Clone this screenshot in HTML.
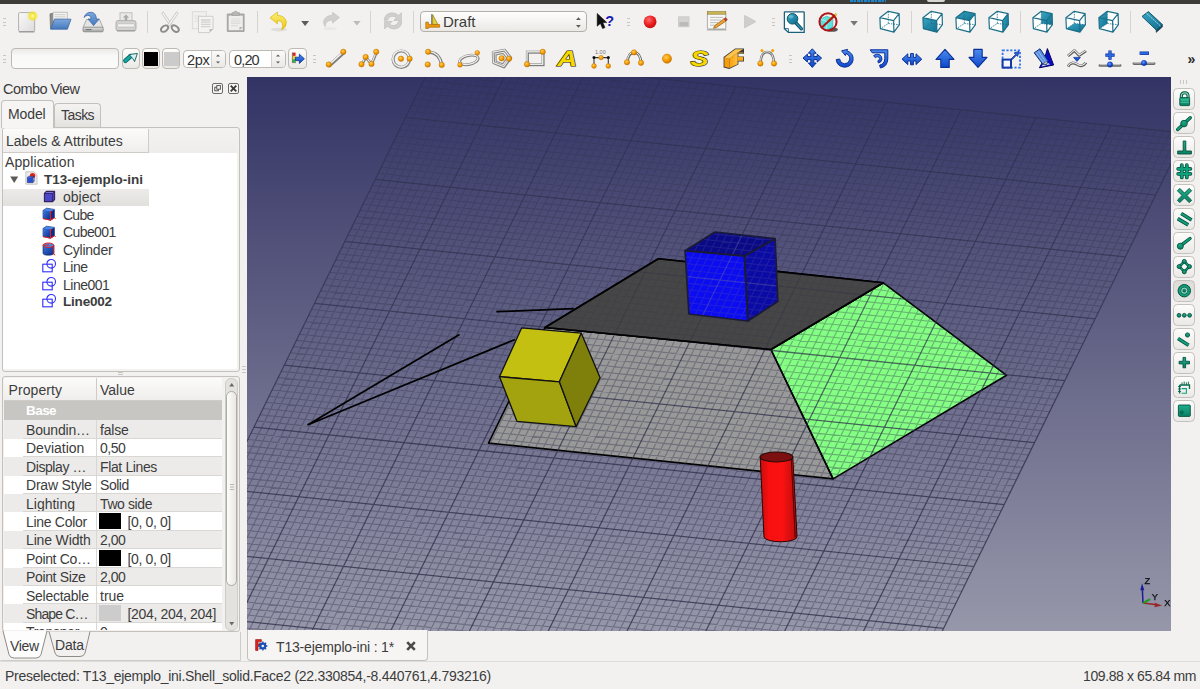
<!DOCTYPE html>
<html lang="es">
<head>
<meta charset="utf-8">
<title>FreeCAD</title>
<style>
*{box-sizing:border-box;margin:0;padding:0}
html,body{width:1200px;height:689px;overflow:hidden;background:#f2f1f0}
body{position:relative;font-family:"Liberation Sans",sans-serif;font-size:14px;color:#3c3c3c}
.abs{position:absolute}
#topstrip{left:0;top:0;width:1200px;height:3.6px;background:#3d3c38}
.t{position:absolute;white-space:nowrap;line-height:16px}
.ic{position:absolute;width:24px;height:24px;overflow:visible}
.sep{position:absolute;width:1px;height:22px;background:#d6d3cf}
.grip{position:absolute;width:3px;height:8px;border-top:1px solid #c9c6c1;border-bottom:1px solid #c9c6c1}
.grip:after{content:"";position:absolute;left:0;top:2.5px;width:3px;height:1px;background:#c9c6c1}
.btn{position:absolute;border:1px solid #bdb9b3;border-radius:4px;background:linear-gradient(#fdfdfc,#ebe9e6)}
.field{position:absolute;border:1px solid #bdb9b3;border-radius:4px;background:linear-gradient(#eceae8,#f8f8f7 35%,#fbfbfa)}
</style>
</head>
<body>
<div id="topstrip" class="abs"></div>
<div class="abs" style="left:850px;top:0;width:36px;height:2px;background:repeating-linear-gradient(90deg,#1c86c8 0 3px,#2a5a80 3px 4px,#1c86c8 4px 6px,#3d3c38 6px 7px)"></div>
<div class="abs" style="left:927px;top:0;width:17.500px;height:1.600px;background:#d8d6d2;border-radius:0 0 2px 2px"></div>
<!-- TOOLBAR ROW 1 -->
<svg width="0" height="0" style="position:absolute"><defs>
<linearGradient id="pg" x1="0" y1="0" x2="1" y2="1"><stop offset="0" stop-color="#fafafa"/><stop offset="1" stop-color="#dcdcdc"/></linearGradient>
<radialGradient id="glow"><stop offset="0" stop-color="#fffbd0"/><stop offset=".45" stop-color="#f6e62a"/><stop offset="1" stop-color="#f0e020" stop-opacity="0"/></radialGradient>
<linearGradient id="blu" x1="0" y1="0" x2="0" y2="1"><stop offset="0" stop-color="#7fa8dc"/><stop offset="1" stop-color="#4479bd"/></linearGradient>
<linearGradient id="drv" x1="0" y1="0" x2="0" y2="1"><stop offset="0" stop-color="#e8e8e8"/><stop offset="1" stop-color="#9c9c9c"/></linearGradient>
<radialGradient id="ball" cx=".4" cy=".35" r=".7"><stop offset="0" stop-color="#ffd060"/><stop offset=".5" stop-color="#f9a000"/><stop offset="1" stop-color="#c87000"/></radialGradient>
<radialGradient id="bball" cx=".4" cy=".35" r=".7"><stop offset="0" stop-color="#6aa0ff"/><stop offset=".6" stop-color="#1048e0"/><stop offset="1" stop-color="#0a2a90"/></radialGradient>
<radialGradient id="red" cx=".4" cy=".35" r=".7"><stop offset="0" stop-color="#ff6a6a"/><stop offset=".6" stop-color="#e81c1c"/><stop offset="1" stop-color="#c01010"/></radialGradient>
<linearGradient id="yel" x1="0" y1="0" x2="0" y2="1"><stop offset="0" stop-color="#fdf07a"/><stop offset="1" stop-color="#e8c60e"/></linearGradient>
<linearGradient id="bl2" x1="0" y1="0" x2="0" y2="1"><stop offset="0" stop-color="#4a8cf0"/><stop offset="1" stop-color="#0f46c8"/></linearGradient>
<linearGradient id="teal" x1="0" y1="0" x2="1" y2="1"><stop offset="0" stop-color="#3aa6c4"/><stop offset="1" stop-color="#0f6f90"/></linearGradient>
<linearGradient id="org" x1="0" y1="0" x2="1" y2="0"><stop offset="0" stop-color="#f6a010"/><stop offset="1" stop-color="#ffc040"/></linearGradient>
<linearGradient id="grn" x1="0" y1="0" x2="0" y2="1"><stop offset="0" stop-color="#1fae8c"/><stop offset="1" stop-color="#0a8064"/></linearGradient>
</defs></svg>
<div class="grip" style="left:3px;top:18px"></div>
<!-- new -->
<svg class="ic" style="left:15px;top:10px" viewBox="0 0 24 24"><rect x="3.6" y="2.6" width="16" height="19" rx="1" fill="url(#pg)" stroke="#aaa9a6" stroke-width=".9"/><path d="M4 21.9h15.4" stroke="#8e8d8a" stroke-width="1"/><circle cx="17.6" cy="6" r="5.800" fill="url(#glow)"/></svg>
<!-- open -->
<svg class="ic" style="left:48px;top:10px" viewBox="0 0 24 24"><path d="M2 4.5Q2 3.5 3 3.5H7.5L9 5H17.5V18.5H2.5z" fill="#8c8c8a" stroke="#6a6a68" stroke-width=".7"/><path d="M5 2.3H19.3V12H5z" fill="#f4f4f4" stroke="#9a9a98" stroke-width=".6"/><path d="M6.5 4.5h11M6.5 6.3h11M6.5 8.1h11" stroke="#c4c4c4" stroke-width=".7"/><path d="M2.6 19.2L6.4 9.2H23L19.4 19.2z" fill="url(#blu)" stroke="#3a68a6" stroke-width=".8"/></svg>
<!-- save -->
<svg class="ic" style="left:81px;top:10px" viewBox="0 0 24 24"><path d="M5.5 9.5H18.5L22 17.5H2z" fill="#e4e4e4" stroke="#9a9a98" stroke-width=".8"/><rect x="2" y="17.2" width="20.2" height="4.6" rx="1" fill="url(#drv)" stroke="#858583" stroke-width=".8"/><path d="M4.5 19.6h6" stroke="#6e6e6c" stroke-width="1"/><path d="M3 7.5Q5 1.8 10.5 2.3Q15.2 3 15.4 9H18.2L12.6 15.6L7 9H10Q10 5.2 6.6 5.4Q4.3 5.6 3 7.5z" fill="url(#blu)" stroke="#2f5fa2" stroke-width=".7"/></svg>
<!-- print (disabled) -->
<svg class="ic" style="left:114px;top:10px" viewBox="0 0 24 24"><rect x="6" y="2.800" width="12" height="9" fill="#e9e9e8" stroke="#b3b3b1" stroke-width=".8"/><path d="M12 4.400l3.200 3.200h-1.900v2.800h-2.600V7.600H8.800z" fill="#a9a9a7"/><path d="M4 10.600H20Q22 10.600 22 12.600V19Q22 20.800 20 20.800H4Q2 20.800 2 19V12.600Q2 10.600 4 10.600z" fill="#d2d2d0" stroke="#a4a4a2" stroke-width=".8"/><rect x="3.400" y="13.800" width="17.200" height="3.200" rx="1.300" fill="#f4f4f3" stroke="#b2b2b0" stroke-width=".6"/><path d="M3 20.800h18" stroke="#9c9c9a" stroke-width="1.200"/></svg>
<div class="sep" style="left:147px;top:11px"></div>
<!-- cut (disabled) -->
<svg class="ic" style="left:158px;top:10px" viewBox="0 0 24 24"><path d="M5.2 1.8L14.6 15.6L12.6 16.4L3.6 3.2z" fill="#f4f4f4" stroke="#b9b9b7" stroke-width=".7"/><path d="M18.6 1.8L9.2 15.6L11.2 16.4L20.2 3.2z" fill="#f4f4f4" stroke="#b9b9b7" stroke-width=".7"/><ellipse cx="6.6" cy="18.6" rx="4" ry="2.6" transform="rotate(-38 6.6 18.6)" fill="none" stroke="#8c8c8a" stroke-width="1.9"/><ellipse cx="17.2" cy="18.6" rx="4" ry="2.6" transform="rotate(38 17.2 18.6)" fill="none" stroke="#8c8c8a" stroke-width="1.9"/></svg>
<!-- copy (disabled) -->
<svg class="ic" style="left:191px;top:10px" viewBox="0 0 24 24"><rect x="1.3" y="1.8" width="14" height="17" fill="#f1f0ef" stroke="#d6d5d3" stroke-width=".8"/><path d="M3.5 6h6M3.5 8.5h6M3.5 11h4" stroke="#dcdbd9" stroke-width=".8"/><path d="M7.5 6.3H22V19L18.5 22.6H7.5z" fill="#f3f3f2" stroke="#c4c3c1" stroke-width=".8"/><path d="M10 10h9.5M10 12.2h9.5M10 14.4h9.5M10 16.6h9.5" stroke="#d3d2d0" stroke-width="1.3"/><path d="M18.5 22.6V19H22z" fill="#bdbcba"/></svg>
<!-- paste (disabled) -->
<svg class="ic" style="left:224px;top:10px" viewBox="0 0 24 24"><rect x="2.8" y="3.4" width="17.8" height="18.6" rx="1" fill="#a7a6a4"/><rect x="4.6" y="5.6" width="14.2" height="14.6" fill="#eeeeed"/><path d="M7 9h9.5M7 11.2h9.5M7 13.4h9.5M7 15.6h7" stroke="#dddcda" stroke-width="1.2"/><path d="M8 2.6H10Q10 1.2 11.7 1.2Q13.4 1.2 13.4 2.6H15.4V5.4H8z" fill="#b9b8b6" stroke="#9b9a98" stroke-width=".6"/><path d="M15.5 20.2V17H18.8z" fill="#b5b4b2"/></svg>
<div class="sep" style="left:257px;top:11px"></div>
<!-- undo -->
<svg class="ic" style="left:267px;top:10px" viewBox="0 0 24 24"><ellipse cx="12" cy="19.6" rx="8" ry="1.8" fill="#d8d6d2" opacity=".7"/><path d="M3 7.8L10.4 2V5.4Q18.6 5.6 19.4 12.4Q19.6 17 14.6 19.8Q16.8 15.6 15 12.6Q13.6 10.6 10.4 10.6V13.8z" fill="url(#yel)" stroke="#d9b40a" stroke-width=".7" stroke-linejoin="round"/></svg>
<svg class="abs" style="left:300px;top:20px" width="10" height="7" viewBox="0 0 10 7"><path d="M1.2 1h7.8L5.1 6z" fill="#5c5b59"/></svg>
<!-- redo (disabled) -->
<svg class="ic" style="left:319px;top:10px" viewBox="0 0 24 24"><ellipse cx="11" cy="18.6" rx="7" ry="1.5" fill="#e6e4e1" opacity=".7"/><path d="M20.4 7.4L13.6 2.2V5.2Q5.8 5.4 4.6 11.6Q4.4 14.6 6.2 16.6Q6.2 13.4 8.4 11.6Q10.2 10.2 13.6 10.2V13.2z" fill="#cfcfcd" stroke="#bebebc" stroke-width=".6" stroke-linejoin="round"/></svg>
<svg class="abs" style="left:352px;top:20px" width="10" height="7" viewBox="0 0 10 7"><path d="M1.2 1h7.4L4.9 5.6z" fill="#bcbbb8"/></svg>
<div class="sep" style="left:370px;top:11px"></div>
<!-- refresh (disabled) -->
<svg class="ic" style="left:381px;top:10px" viewBox="0 0 24 24"><path d="M3.2 10.2Q3.6 3.4 11 2.8Q15.2 2.8 17.6 5.6L20.4 2.8V10.4H12.8L15.4 7.8Q13.6 6 11 6.2Q7 6.8 6.6 10.2z" fill="#cfcfcd" stroke="#b9b9b7" stroke-width=".6"/><path d="M20.8 11.6Q20.4 18.4 13 19Q8.800 19 6.400 16.200L3.600 19V11.400H11.200L8.600 14Q10.400 15.800 13 15.600Q17 15 17.400 11.600z" fill="#cfcfcd" stroke="#b9b9b7" stroke-width=".6"/></svg>
<div class="sep" style="left:413px;top:11px"></div>
<!-- combobox -->
<div class="btn" style="left:420px;top:11px;width:167px;height:21px;border-color:#b3afa9"></div>
<svg class="abs" style="left:424px;top:13px" width="18" height="17" viewBox="0 0 18 17"><path d="M7.8 1.2V11.5" stroke="#5a5a58" stroke-width="1"/><path d="M8.6 1.6L13.8 11.4H8.6z" fill="#e8d23a" stroke="#8a7a10" stroke-width=".7"/><path d="M1.8 9.2H4.400V11.6H15.600V14.200H4.400V15.400H1.800z" fill="#f39a0e" stroke="#a86404" stroke-width=".7"/></svg>
<div class="t" style="left:443px;top:13.5px;font-size:15px;color:#3c3c3c">Draft</div>
<svg class="abs" style="left:574px;top:14px" width="9" height="16" viewBox="0 0 9 16"><path d="M2 6L4.400 3.200L6.800 6z" fill="#5c5b59"/><path d="M2 11L4.400 13.800L6.800 11z" fill="#5c5b59"/></svg>
<!-- whats this -->
<svg class="ic" style="left:593px;top:10px" viewBox="0 0 24 24"><path d="M4.200 3.400V16.200L7.400 13.400L9.600 18.600L12 17.600L9.800 12.600H13.800z" fill="#111" stroke="#000" stroke-width=".5"/><text x="12.200" y="15.600" font-family="Liberation Sans,sans-serif" font-weight="bold" font-size="14.500" fill="#1a1ab4">?</text></svg>
<div class="grip" style="left:627px;top:18px"></div>
<!-- record -->
<svg class="ic" style="left:638px;top:10px" viewBox="0 0 24 24"><circle cx="12.100" cy="11.800" r="6.400" fill="url(#red)"/></svg>
<!-- stop disabled -->
<svg class="ic" style="left:671px;top:10px" viewBox="0 0 24 24"><rect x="7.600" y="6.800" width="10.400" height="10" fill="#d4d3d1" stroke="#c9c8c6" stroke-width=".8"/><rect x="8.400" y="12" width="8.800" height="4.200" fill="#bcbbb9"/></svg>
<!-- macro edit -->
<svg class="ic" style="left:704px;top:10px" viewBox="0 0 24 24"><path d="M2.800 20.600H22.800L21.400 17.600H4z" fill="#b5b4b1"/><rect x="3.400" y="2.600" width="18.400" height="16.400" rx="1" fill="#f6f6f4" stroke="#9c9b98" stroke-width=".8"/><rect x="3.400" y="1.600" width="18.400" height="2.600" fill="#c9b458" stroke="#8d7c2e" stroke-width=".6"/><path d="M6 7.400h13M6 10h11M6 12.600h8M6 15.200h6" stroke="#b8b7b4" stroke-width=".9"/><path d="M10.600 15.800L20 8.800L22 11L12.400 17.600L9.600 18.200z" fill="#f0a030" stroke="#8a5a14" stroke-width=".7"/><path d="M20 8.800L21.600 7.600L23.400 9.800L22 11z" fill="#d04040" stroke="#7a2020" stroke-width=".5"/></svg>
<!-- play disabled -->
<svg class="ic" style="left:737px;top:10px" viewBox="0 0 24 24"><path d="M7.600 5.400L18.800 11.600L7.600 17.800z" fill="#cfcecc" stroke="#c2c1bf" stroke-width=".8"/></svg>
<div class="grip" style="left:772px;top:18px"></div>
<!-- fit all -->
<svg class="ic" style="left:782px;top:10px" viewBox="0 0 24 24"><path d="M3 1.800H21.600Q22.200 1.800 22.200 2.400V22.400H6.400L2.400 18.800V2.400Q2.400 1.800 3 1.800z" fill="#fff" stroke="#1d607a" stroke-width="1.300"/><path d="M2.600 18.600H6.400V22.200" fill="none" stroke="#1d607a" stroke-width=".9"/><path d="M14 13L19.400 18.800" stroke="#124e66" stroke-width="3.400" stroke-linecap="round"/><path d="M14 13L19.400 18.800" stroke="#2a93b2" stroke-width="1.600" stroke-linecap="round"/><circle cx="10.500" cy="8.800" r="5.300" fill="url(#teal)" stroke="#125068" stroke-width="1"/><ellipse cx="9" cy="6.800" rx="2.400" ry="1.700" fill="#7fd0e4" opacity=".6"/></svg>
<!-- draw style -->
<svg class="ic" style="left:815px;top:10px" viewBox="0 0 24 24"><ellipse cx="17" cy="19.600" rx="6" ry="2.200" fill="#222" opacity=".75"/><path d="M5.600 9L11.600 6.200L17.800 8.600V17L11.600 20.400L5.600 17.600z" fill="#5fe0e0" stroke="#2fa8ac" stroke-width=".6"/><path d="M5.600 9L11.600 11.400L17.800 8.600M11.600 11.400V20.400" stroke="#bff6f6" stroke-width=".8" fill="none"/><path d="M12.400 10.400L20.800 3.400L22 4.600L13.800 11.800z" fill="#f0d820" stroke="#a08a10" stroke-width=".5"/><circle cx="13" cy="11.800" r="8.600" fill="none" stroke="#b01414" stroke-width="2"/><path d="M6.800 17.600L19.200 6" stroke="#b01414" stroke-width="2"/></svg>
<svg class="abs" style="left:849px;top:20px" width="10" height="7" viewBox="0 0 10 7"><path d="M1.400 1h7.400L5.100 5.800z" fill="#777674"/></svg>
<div class="sep" style="left:867px;top:11px"></div>
<svg width="0" height="0" style="position:absolute"><defs>
<g id="cubew" fill="none" stroke="#1d6f88" stroke-width="1.200" stroke-linejoin="round"><path d="M2.900 7.700L16.600 10.600L16.900 22.200L3.400 18.700zM2.900 7.700L11.300 1.300L22.100 3.600L16.600 10.600M22.100 3.600L22.400 14.700L16.900 22.200"/><path d="M11.300 1.300V13.500L3.400 18.700M11.300 13.500L22.400 14.700" stroke-width=".8" stroke-dasharray="1.600 1"/></g>
<path id="cubebg" d="M2.900 7.700L11.300 1.300L22.100 3.600L22.400 14.700L16.900 22.200L3.400 18.700z" fill="#fff"/>
</defs></svg>
<svg class="ic" style="left:877px;top:10px" viewBox="0 0 24 24"><use href="#cubebg"/><use href="#cubew"/></svg>
<div class="sep" style="left:911px;top:11px"></div>
<svg class="ic" style="left:920px;top:10px" viewBox="0 0 24 24"><use href="#cubebg"/><path d="M2.900 7.700L16.600 10.600L16.900 22.200L3.400 18.700z" fill="url(#teal)"/><use href="#cubew"/></svg>
<svg class="ic" style="left:953px;top:10px" viewBox="0 0 24 24"><use href="#cubebg"/><path d="M2.900 7.700L11.300 1.300L22.100 3.600L16.600 10.600z" fill="url(#teal)"/><use href="#cubew"/></svg>
<svg class="ic" style="left:986px;top:10px" viewBox="0 0 24 24"><use href="#cubebg"/><path d="M16.600 10.600L22.100 3.600L22.400 14.700L16.900 22.200z" fill="url(#teal)"/><use href="#cubew"/></svg>
<div class="sep" style="left:1020px;top:11px"></div>
<svg class="ic" style="left:1030px;top:10px" viewBox="0 0 24 24"><use href="#cubebg"/><path d="M11.300 1.300L22.100 3.600L22.400 14.700L11.300 13.500z" fill="url(#teal)"/><use href="#cubew"/></svg>
<svg class="ic" style="left:1063px;top:10px" viewBox="0 0 24 24"><use href="#cubebg"/><path d="M3.400 18.700L11.300 13.500L22.400 14.700L16.900 22.200z" fill="url(#teal)"/><use href="#cubew"/></svg>
<svg class="ic" style="left:1096px;top:10px" viewBox="0 0 24 24"><use href="#cubebg"/><path d="M2.900 7.700L11.300 1.300V13.500L3.400 18.700z" fill="url(#teal)"/><use href="#cubew"/></svg>
<div class="sep" style="left:1130px;top:11px"></div>
<!-- ruler -->
<svg class="ic" style="left:1140px;top:10px" viewBox="0 0 24 24"><path d="M2 6.400L8.400 1.600L22.400 14.600L16.200 20z" fill="url(#teal)" stroke="#0e4c62" stroke-width=".9"/><path d="M16.200 20V22.400L22.400 17V14.600" fill="#12485c" stroke="#0e3a4a" stroke-width=".6"/><path d="M6.600 3.400l1.800 1.700M8.800 5.400l1.200 1.100M10.600 7l1.800 1.700M12.800 9l1.200 1.100M14.600 10.600l1.800 1.700M16.800 12.600l1.200 1.100M18.600 14.300l1.800 1.700" stroke="#bfe6f0" stroke-width=".8"/></svg>
<!-- TOOLBAR ROW 2 -->
<div class="grip" style="left:3px;top:55px"></div>
<div class="field" style="left:11px;top:48px;width:108px;height:21px"></div>
<div class="btn" style="left:122px;top:48px;width:18px;height:21px"></div>
<svg class="abs" style="left:122px;top:48px" width="18" height="21" viewBox="0 0 18 21"><path d="M3.400 12.800L8.600 8.200" stroke="#0a6e6e" stroke-width="4.600" stroke-linecap="round"/><path d="M3.400 12.800L8.600 8.200" stroke="#17a8a4" stroke-width="2.600" stroke-linecap="round"/><path d="M7.200 6.600L15.400 5.400L12.600 13.600L10.800 10.600z" fill="#d9f2ee" stroke="#0a5c5c" stroke-width=".9" stroke-linejoin="round"/></svg>
<div class="btn" style="left:142px;top:48px;width:18px;height:21px"></div>
<div class="abs" style="left:143.700px;top:51.500px;width:14.600px;height:14.500px;background:#000"></div>
<div class="btn" style="left:162px;top:48px;width:18px;height:21px"></div>
<div class="abs" style="left:164px;top:51.500px;width:14.600px;height:14.500px;background:#cbcbcb"></div>
<div class="field" style="left:183px;top:50px;width:43px;height:18px;background:#fff"></div>
<div class="abs" style="left:211px;top:51px;width:14px;height:16px;border-left:1px solid #d5d2ce;background:linear-gradient(#fafaf9,#ebe9e6);border-radius:0 3px 3px 0"></div>
<div class="t" style="left:187px;top:51.8px;font-size:14.500px;letter-spacing:-.3px;color:#333">2px</div>
<svg class="abs" style="left:213px;top:52px" width="10" height="14" viewBox="0 0 10 14"><path d="M3 4.600L5 2.400L7 4.600z" fill="#5c5b59"/><path d="M3 9.400L5 11.600L7 9.400z" fill="#5c5b59"/></svg>
<div class="field" style="left:228.500px;top:50px;width:57.500px;height:18px;background:#fff"></div>
<div class="abs" style="left:271px;top:51px;width:14px;height:16px;border-left:1px solid #d5d2ce;background:linear-gradient(#fafaf9,#ebe9e6);border-radius:0 3px 3px 0"></div>
<div class="t" style="left:234px;top:51.8px;font-size:14.500px;letter-spacing:-.85px;color:#333">0,20</div>
<svg class="abs" style="left:273px;top:52px" width="10" height="14" viewBox="0 0 10 14"><path d="M3 4.600L5 2.400L7 4.600z" fill="#5c5b59"/><path d="M3 9.400L5 11.600L7 9.400z" fill="#5c5b59"/></svg>
<div class="btn" style="left:288px;top:48px;width:18.500px;height:21px"></div>
<svg class="abs" style="left:288px;top:48px" width="19" height="21" viewBox="0 0 19 21"><rect x="4.600" y="4.600" width="3" height="3.300" fill="#e02020"/><rect x="4.600" y="7.900" width="3" height="3.300" fill="#f0d020"/><rect x="4.600" y="11.200" width="3" height="3" fill="#20c020"/><path d="M4.400 4.400V14.600H8" fill="none" stroke="#555" stroke-width=".7"/><path d="M7.400 9.200H11.400V6.200L16.400 10.800L11.400 15.400V12.600H7.400z" fill="url(#bl2)" stroke="#0a2f96" stroke-width=".8" stroke-linejoin="round"/></svg>
<div class="grip" style="left:313px;top:55px"></div>
<svg width="0" height="0" style="position:absolute"><defs><circle id="ob" r="2.700" fill="url(#ball)" stroke="#b46a00" stroke-width=".4"/><circle id="bb" r="2.700" fill="url(#bball)" stroke="#0a2a80" stroke-width=".4"/></defs></svg>
<!-- line -->
<svg class="ic" style="left:324px;top:47px" viewBox="0 0 24 24"><path d="M5.600 18.400L19.600 5.600" stroke="#7d7d7b" stroke-width="3.600" stroke-linecap="round"/><path d="M5.200 17.600L19.200 4.800" stroke="#efefee" stroke-width="1.600"/><use href="#ob" x="4.750" y="17.500"/><use href="#ob" x="19.300" y="4.800"/></svg>
<!-- wire -->
<svg class="ic" style="left:357px;top:47px" viewBox="0 0 24 24"><path d="M4.800 17.600L8.800 10.400L14.600 17.200L19.500 5.200" fill="none" stroke="#7d7d7b" stroke-width="2.800" stroke-linejoin="round"/><path d="M4.500 17.300L8.600 10L14.500 16.900L19.200 4.800" fill="none" stroke="#efefee" stroke-width="1.100"/><use href="#ob" x="4.500" y="17.300"/><use href="#ob" x="8.600" y="10"/><use href="#ob" x="14.500" y="16.900"/><use href="#ob" x="19.250" y="4.800"/></svg>
<!-- circle -->
<svg class="ic" style="left:390px;top:47px" viewBox="0 0 24 24"><circle cx="11.300" cy="12.200" r="8.200" fill="none" stroke="#8a8a88" stroke-width="3.200"/><circle cx="11" cy="11.700" r="8.200" fill="none" stroke="#f1f1f0" stroke-width="1.500"/><use href="#ob" x="11" y="11.700"/><use href="#ob" x="19.600" y="11.700"/></svg>
<!-- arc -->
<svg class="ic" style="left:423px;top:47px" viewBox="0 0 24 24"><path d="M6.600 5.200Q16.200 6 18.800 17.600" fill="none" stroke="#7d7d7b" stroke-width="3.200" stroke-linecap="round"/><path d="M6.200 4.700Q16 5.400 18.500 17.200" fill="none" stroke="#efefee" stroke-width="1.300"/><use href="#ob" x="5.100" y="4.800"/><use href="#ob" x="4.700" y="17.500"/><use href="#ob" x="18.700" y="17.900"/></svg>
<!-- ellipse -->
<svg class="ic" style="left:456px;top:47px" viewBox="0 0 24 24"><ellipse cx="12.900" cy="13" rx="9.400" ry="4.500" transform="rotate(-12 12.900 13)" fill="none" stroke="#7d7d7b" stroke-width="2.800"/><ellipse cx="12.700" cy="12.700" rx="9.400" ry="4.500" transform="rotate(-12 12.700 12.700)" fill="none" stroke="#efefee" stroke-width="1.200"/><use href="#ob" x="21.300" y="5.800" transform="translate(2.100 .6) scale(.9)"/><use href="#ob" x="4" y="17.900" transform="translate(.4 1.800) scale(.9)"/></svg>
<!-- polygon -->
<svg class="ic" style="left:489px;top:47px" viewBox="0 0 24 24"><path d="M4.200 5.400L15.600 3.200L21.800 10.800L15 20L4.600 15.800z" fill="none" stroke="#7d7d7b" stroke-width="2.800" stroke-linejoin="round"/><path d="M4 5.100L15.400 2.900L21.500 10.500L14.800 19.600L4.400 15.500z" fill="none" stroke="#efefee" stroke-width="1.100"/><path d="M7 7.800L14 6.400L17.800 11.200L13.600 16.800L7.200 14.200z" fill="none" stroke="#8f8f8d" stroke-width="1.200"/><use href="#ob" x="12.600" y="11.300"/><use href="#ob" x="20" y="11.700"/></svg>
<!-- rectangle -->
<svg class="ic" style="left:523px;top:47px" viewBox="0 0 24 24"><rect x="4.400" y="5.200" width="15.700" height="12.500" fill="none" stroke="#7d7d7b" stroke-width="3"/><rect x="4" y="4.800" width="15.700" height="12.500" fill="none" stroke="#efefee" stroke-width="1.300"/><use href="#ob" x="19.700" y="4.800"/><use href="#ob" x="4" y="17.300"/></svg>
<!-- text A -->
<svg class="ic" style="left:556px;top:47px" viewBox="0 0 24 24"><text x="1.200" y="19.400" font-family="Liberation Sans,sans-serif" font-style="italic" font-weight="bold" font-size="22.500" fill="#f4d800" stroke="#1a1600" stroke-width="1.100" paint-order="stroke" textLength="20" lengthAdjust="spacingAndGlyphs">A</text></svg>
<!-- dimension -->
<svg class="ic" style="left:589px;top:47px" viewBox="0 0 24 24"><text x="6" y="6.600" font-family="Liberation Sans,sans-serif" font-size="5.500" fill="#777">1.00</text><path d="M5 10.600V19M19.300 10.600V19M5 10.600H19.300" stroke="#3a3a3a" stroke-width="1.100" fill="none"/><circle cx="5" cy="10.600" r="1.500" fill="#111"/><circle cx="19.300" cy="10.600" r="1.500" fill="#111"/><use href="#ob" x="5" y="19" transform="translate(.5 1.900) scale(.9)"/><use href="#ob" x="19.300" y="19" transform="translate(1.900 1.900) scale(.9)"/><use href="#ob" x="12" y="10.600" transform="translate(1.800 1.600) scale(.85)"/></svg>
<!-- bspline -->
<svg class="ic" style="left:622px;top:47px" viewBox="0 0 24 24"><path d="M5.400 15.600Q6 5.600 12.200 5.600Q18.400 5.600 19.200 16" fill="none" stroke="#6e6e6c" stroke-width="2.600"/><path d="M5.200 15.200Q5.800 5.200 12 5.200Q18.200 5.200 19 15.600" fill="none" stroke="#efefee" stroke-width="1"/><use href="#ob" x="12" y="5.400"/><use href="#ob" x="5" y="15.200"/><use href="#ob" x="19" y="15.800"/></svg>
<!-- point -->
<svg class="ic" style="left:655px;top:47px" viewBox="0 0 24 24"><circle cx="12" cy="11.700" r="4.600" fill="url(#ball)" stroke="#c07400" stroke-width=".5"/></svg>
<!-- shapestring S -->
<svg class="ic" style="left:688px;top:47px" viewBox="0 0 24 24"><text x="2.600" y="19.200" font-family="Liberation Sans,sans-serif" font-style="italic" font-weight="bold" font-size="22" fill="#f4d800" stroke="#2a2400" stroke-width="1.100" paint-order="stroke" textLength="18" lengthAdjust="spacingAndGlyphs">S</text></svg>
<!-- facebinder -->
<svg class="ic" style="left:722px;top:47px" viewBox="0 0 24 24"><path d="M1.600 10L13.200 1.400H22V6.800H16.400V9.400H22V14.600H16.400V17.600L7.200 22L1.600 20.600z" fill="#3a3a3a"/><path d="M2.400 10.600L7.400 11.800V21L2.400 19.800z" fill="#f79c0c"/><path d="M7.400 11.800L15.600 5.400V17.200L7.400 21z" fill="url(#org)"/><path d="M2.400 10.600L13.400 2.200H21.200L15.600 5.400L7.400 11.800z" fill="#ffc44a"/><path d="M15.600 5.400H21.200V6.200H16.200z M15.600 9.800H21.200V13.800H15.600z" fill="#f9a81c"/></svg>
<!-- bezier -->
<svg class="ic" style="left:755px;top:47px" viewBox="0 0 24 24"><path d="M5.600 16.400Q5.800 5 12.200 5Q18.600 5 19 16.400" fill="none" stroke="#6e6e6c" stroke-width="2.400"/><path d="M5.400 16Q5.600 4.600 12 4.600Q18.400 4.600 18.800 16" fill="none" stroke="#efefee" stroke-width=".9"/><circle cx="7" cy="3.500" r="1.500" fill="#f9a000"/><circle cx="17.700" cy="3.500" r="1.500" fill="#f9a000"/><use href="#ob" x="5.400" y="16.500"/><use href="#ob" x="19" y="16.500"/></svg>
<div class="grip" style="left:789px;top:55px"></div>
<!-- move -->
<svg class="ic" style="left:800px;top:47px" viewBox="0 0 24 24"><path d="M12.300 1.800L16.200 6.200H13.800V9.600H17.200V7.200L21.600 11.100L17.200 15V12.600H13.800V16H16.200L12.300 20.400L8.400 16H10.800V12.600H7.400V15L3 11.100L7.400 7.200V9.600H10.800V6.200H8.400z" fill="url(#bl2)" stroke="#0a2f96" stroke-width="1" stroke-linejoin="round"/></svg>
<!-- rotate -->
<svg class="ic" style="left:833px;top:47px" viewBox="0 0 24 24"><path d="M14.600 2.400L8.600 3.800L12.400 8.600L13 6.400Q17.600 8.400 16.600 13Q15.400 16.800 11.400 16.800Q7.200 16.400 6.600 12L3.200 12.600Q4 19.400 11.400 20.200Q18.600 19.800 20 13.400Q21 6.400 14 3.800z" fill="url(#bl2)" stroke="#0a2f96" stroke-width="1" stroke-linejoin="round"/></svg>
<!-- offset -->
<svg class="ic" style="left:866.500px;top:47px" viewBox="0 0 24 24"><path d="M3.200 2.800H20.800V12Q20.400 19.600 13.400 21L12.600 18.200Q17.600 17 17.800 11.600V5.800H5.200z" fill="url(#bl2)" stroke="#0a2f96" stroke-width="1" stroke-linejoin="round"/><path d="M6.600 8.600Q9 6.600 12 7.400Q15.400 8.800 15 12.400Q14.400 15.400 11.400 16L10.800 13.800Q12.600 13.200 12.600 11.600Q12.400 9.800 10.600 9.800Q9.200 9.800 8.400 10.800z" fill="url(#bl2)" stroke="#0a2f96" stroke-width=".9" stroke-linejoin="round"/></svg>
<!-- trimex -->
<svg class="ic" style="left:900px;top:47px" viewBox="0 0 24 24"><path d="M2 12.200L7.800 6.800V10.400H10.600V6.600H13.400V10.400H16V6.800L21.800 12.200L16 17.600V14H13.400V17.800H10.600V14H7.800V17.600z" fill="url(#bl2)" stroke="#0a2f96" stroke-width="1" stroke-linejoin="round"/></svg>
<!-- upgrade -->
<svg class="ic" style="left:932.600px;top:47px" viewBox="0 0 24 24"><path d="M12 2.400L21 12.400H16.200V20.400H7.800V12.400H3z" fill="url(#bl2)" stroke="#0a2f96" stroke-width="1.100" stroke-linejoin="round"/></svg>
<!-- downgrade -->
<svg class="ic" style="left:966px;top:47px" viewBox="0 0 24 24"><path d="M12 20.400L21 10.400H16.200V2.400H7.800V10.400H3z" fill="url(#bl2)" stroke="#0a2f96" stroke-width="1.100" stroke-linejoin="round"/></svg>
<!-- scale -->
<svg class="ic" style="left:999px;top:47px" viewBox="0 0 24 24"><rect x="3.600" y="3.400" width="17.400" height="17.200" fill="none" stroke="#2f74f0" stroke-width="1.800" stroke-dasharray="2.200 1.600"/><rect x="3.600" y="12.600" width="8.400" height="8" fill="#f4f6ff" stroke="#0f3aa8" stroke-width="2"/><path d="M12.400 11.600L16.600 7.400L15.200 6L20 4.400L18.600 9.400L17.400 8.200L13.400 12.400z" fill="#2a66dc" stroke="#0a2f96" stroke-width=".8" stroke-linejoin="round"/></svg>
<!-- edit -->
<svg class="ic" style="left:1032px;top:47px" viewBox="0 0 24 24"><path d="M15.400 1.600L21.600 18L7.400 20.800L12.600 11.400z" fill="#0c0cc8" stroke="#06065a" stroke-width="1"/><path d="M12.800 14.200L18.200 17.200L9.600 19.400z" fill="#e8e8f4"/><path d="M2.200 5.800L8 1.800L15.800 13.600L14.600 17.400L10.600 17z" fill="#5a8fe0" stroke="#0a2f7a" stroke-width="1"/><path d="M4 5.600L12 16.400M6.200 4.200L14 15.200" stroke="#a9c8f4" stroke-width=".8"/><path d="M10.600 17L14.600 17.400L15.800 13.600z" fill="#f0e0c0" stroke="#0a2f7a" stroke-width=".6"/></svg>
<!-- wire to bspline -->
<svg class="ic" style="left:1065px;top:47px" viewBox="0 0 24 24"><path d="M3 9L9.400 3.600L14.200 8.400L21 3.800" fill="none" stroke="#5a5a58" stroke-width="2.800" stroke-linejoin="round"/><path d="M3 8.600L9.400 3.200L14.200 8L21 3.400" fill="none" stroke="#f1f1f0" stroke-width="1.100"/><path d="M3 19.400Q6.600 13.800 12 17.400Q17.400 21 21 15.400" fill="none" stroke="#5a5a58" stroke-width="2.800"/><path d="M3 19Q6.600 13.400 12 17Q17.400 20.600 21 15" fill="none" stroke="#f1f1f0" stroke-width="1.100"/><path d="M8.600 10.400H15.400L12 14.400z" fill="#1c54d8" stroke="#0a2f96" stroke-width=".7"/></svg>
<!-- add point -->
<svg class="ic" style="left:1098.400px;top:47px" viewBox="0 0 24 24"><path d="M2 18.400H22" stroke="#6a6a68" stroke-width="2.800" stroke-linecap="round"/><path d="M2 17.700H22" stroke="#d8d8d6" stroke-width="1" stroke-linecap="round"/><path d="M12 3.600V12.800M7.400 8.200H16.600" stroke="#0a2f96" stroke-width="3.200"/><path d="M12 4V12.400M7.800 8.200H16.200" stroke="#2a68e8" stroke-width="2"/><use href="#bb" x="12" y="17.500"/></svg>
<!-- del point -->
<svg class="ic" style="left:1131.500px;top:47px" viewBox="0 0 24 24"><path d="M2 16.600H22" stroke="#6a6a68" stroke-width="2.800" stroke-linecap="round"/><path d="M2 15.900H22" stroke="#d8d8d6" stroke-width="1" stroke-linecap="round"/><path d="M7.600 6.200H17" stroke="#0a2f96" stroke-width="3.400"/><path d="M8 6.200H16.600" stroke="#2a68e8" stroke-width="2.100"/><use href="#bb" x="12" y="16"/></svg>
<div class="t" style="left:1187.500px;top:50.500px;font-size:14px;font-weight:bold;color:#2a2a2a;letter-spacing:-1px">»</div>
<!-- LEFT DOCK -->
<style>
#dock .t{font-size:14px}
.tab{position:absolute;border:1px solid #c4c1bc;border-bottom:none;border-radius:4px 4px 0 0}
.row{position:absolute;left:3px;height:18px;width:234px}
.trow{position:absolute;left:0;width:237px;height:17.5px}
.pr{position:absolute;left:4px;width:218px;height:18.4px}
.pr.g{background:#ecebe9}
.pr.w{background:#fff}
.pr .k{position:absolute;left:22px;top:1.6px;width:70px;height:17px;line-height:17px;white-space:nowrap;font-size:14px;letter-spacing:-0.2px}
.pr .v{position:absolute;left:96px;top:1.6px;height:17px;line-height:17px;white-space:nowrap;font-size:14px;letter-spacing:-0.2px}
.pr .ln{position:absolute;left:19px;right:0;bottom:0;height:1px;background:#d9d7d3}
.pr .vl{position:absolute;left:92px;top:0;bottom:0;width:1px;background:#d9d7d3}
.sw{position:absolute;left:95px;top:1px;width:22px;height:16px}
</style>
<div id="dock">
<div class="t" style="left:3px;top:81px;font-size:14.5px;letter-spacing:-0.55px">Combo View</div>
<!-- dock buttons -->
<svg class="abs" style="left:212px;top:83px" width="28" height="12" viewBox="0 0 28 12"><rect x=".5" y=".5" width="10" height="10" rx="1.5" fill="#f7f6f5" stroke="#6b6a66"/><rect x="2.8" y="4.2" width="3.6" height="3.6" fill="none" stroke="#4a4a48" stroke-width=".9"/><rect x="4.8" y="2.6" width="3.6" height="3.6" fill="#f7f6f5" stroke="#4a4a48" stroke-width=".9"/><rect x="16.5" y=".5" width="10" height="10" rx="1.5" fill="#f7f6f5" stroke="#6b6a66"/><path d="M18.7 2.7l5.6 5.6M24.3 2.7l-5.6 5.6" stroke="#3c3c3a" stroke-width="1.9"/></svg>
<!-- tabs -->
<div class="abs" style="left:2px;top:127px;width:238px;height:245px;border:1px solid #c4c1bc;border-radius:3px;background:#f2f1f0"></div>
<div class="tab" style="left:54px;top:103px;width:47px;height:24px;background:linear-gradient(#f4f3f2,#e4e2df)"></div>
<div class="tab" style="left:1px;top:100px;width:53px;height:28px;background:#f6f5f4"></div>
<div class="t" style="left:8px;top:106px;letter-spacing:-0.1px">Model</div>
<div class="t" style="left:61px;top:107px;letter-spacing:-0.55px">Tasks</div>
<!-- tree -->
<div class="abs" style="left:3px;top:153px;width:234px;height:216px;background:#fff"></div>
<div class="abs" style="left:3px;top:129px;width:146px;height:24px;background:linear-gradient(#fbfbfa,#efeeec);border-right:1px solid #cfccc8;border-bottom:1px solid #cfccc8"></div>
<div class="abs" style="left:149px;top:129px;width:88px;height:24px;background:linear-gradient(#f3f2f1,#eeedeb)"></div>
<div class="t" style="left:6px;top:133px;letter-spacing:0px">Labels &amp; Attributes</div>
<div class="abs" style="left:3px;top:188.5px;width:146px;height:17px;background:linear-gradient(#ecebe9,#e2e0dd)"></div>
<div class="t" style="left:5px;top:154px;letter-spacing:0.1px">Application</div>
<svg class="abs" style="left:9px;top:174px" width="11" height="11" viewBox="0 0 11 11"><path d="M1.200 2.600h8L5.200 9z" fill="#5a5a58"/></svg>
<div class="t" style="left:44px;top:171.5px;font-weight:bold;font-size:13.5px;letter-spacing:0px">T13-ejemplo-ini</div>
<div class="t" style="left:63px;top:189px">object</div>
<div class="t" style="left:63px;top:206.5px;letter-spacing:-0.75px">Cube</div>
<div class="t" style="left:63px;top:224px;letter-spacing:-0.6px">Cube001</div>
<div class="t" style="left:63px;top:241.5px;letter-spacing:-0.25px">Cylinder</div>
<div class="t" style="left:63px;top:259px;letter-spacing:-0.5px">Line</div>
<div class="t" style="left:63px;top:276.5px;letter-spacing:-0.5px">Line001</div>
<div class="t" style="left:63px;top:294px;font-weight:bold;font-size:13.5px;letter-spacing:-0.2px">Line002</div>
<!-- tree icons -->
<svg class="abs" style="left:25px;top:171px" width="13" height="14" viewBox="0 0 13 14"><path d="M.8 .8H9L12 3.600V13.200H.8z" fill="#ececea" stroke="#b4b3b0" stroke-width=".7"/><circle cx="7.600" cy="4.600" r="2.700" fill="#e02418"/><path d="M2.400 6.400H7.800V11.600H2.400z" fill="#2a4fd0" stroke="#142a80" stroke-width=".6"/><path d="M2.400 6.400L3.800 5.200H9.200L7.800 6.400M9.200 5.200V10.400L7.800 11.600" fill="#5070e0" stroke="#142a80" stroke-width=".5"/></svg>
<svg class="abs" style="left:43px;top:190px" width="13" height="13" viewBox="0 0 13 13"><path d="M1.400 3.400L3.400 1.400H11.600V9.600L9.600 11.600H1.400z" fill="#4a46c8" stroke="#35205c" stroke-width="1.100" stroke-linejoin="round"/><path d="M1.400 3.400H9.600V11.600M9.600 3.400L11.600 1.400" fill="none" stroke="#35205c" stroke-width=".9"/><path d="M2.400 2.900L3.800 1.900H10.600L9.400 2.900z" fill="#7a78e0"/></svg>
<svg width="0" height="0" style="position:absolute"><defs>
<linearGradient id="cb1" x1="0" y1="0" x2="1" y2="1"><stop offset="0" stop-color="#3a7ae0"/><stop offset="1" stop-color="#0a2a88"/></linearGradient>
<g id="cubei"><path d="M1 3.400L4.600 1.200L12.400 2.400V10.800L8.600 13.200L1 11.600z" fill="#0c2c8c" stroke="#08205c" stroke-width=".6"/><path d="M1 3.400L8.600 4.800V13.200L1 11.600z" fill="url(#cb1)"/><path d="M1 3.400L4.600 1.200L12.400 2.400L8.600 4.800z" fill="#4a86e8"/><path d="M8.600 4.800V13.200M1 11.600L8.600 13.200L12.400 10.800" fill="none" stroke="#e8201c" stroke-width="1"/><circle cx="8.600" cy="4.800" r=".9" fill="#e8201c"/><path d="M12.400 10.800l1.200.8" stroke="#e8201c" stroke-width="1"/></g>
<g id="linei" fill="none" stroke="#2e2eff" stroke-width="1.100"><rect x=".8" y="5.200" width="9.400" height="7.600"/><circle cx="9.200" cy="4.800" r="4.300"/></g>
</defs></svg>
<svg class="abs" style="left:42px;top:207px;overflow:visible" width="14" height="14" viewBox="0 0 14 14"><use href="#cubei"/></svg>
<svg class="abs" style="left:42px;top:224.500px;overflow:visible" width="14" height="14" viewBox="0 0 14 14"><use href="#cubei"/></svg>
<svg class="abs" style="left:42px;top:241.500px;overflow:visible" width="14" height="14" viewBox="0 0 14 14"><path d="M1 3.200V11Q1 13.200 6.400 13.200Q11.800 13.200 11.800 11V3.200z" fill="url(#cb1)" stroke="#08205c" stroke-width=".6"/><ellipse cx="6.400" cy="3.200" rx="5.400" ry="2.200" fill="#4a86e8" stroke="#e8201c" stroke-width="1"/><path d="M2 3.200H7" stroke="#e8201c" stroke-width="1"/><path d="M11.800 3.200V12.400l1.400.6" fill="none" stroke="#e8201c" stroke-width="1"/></svg>
<svg class="abs" style="left:42px;top:259px;overflow:visible" width="15" height="14" viewBox="0 0 15 14"><use href="#linei"/></svg>
<svg class="abs" style="left:42px;top:276.500px;overflow:visible" width="15" height="14" viewBox="0 0 15 14"><use href="#linei"/></svg>
<svg class="abs" style="left:42px;top:294px;overflow:visible" width="15" height="14" viewBox="0 0 15 14"><use href="#linei"/></svg>
<!-- splitter + property panel -->
<div class="abs" style="left:118px;top:372px;width:5px;height:3px;border-top:1px solid #c9c6c1;border-bottom:1px solid #c9c6c1"></div>
<div class="abs" style="left:2px;top:376px;width:238px;height:256px;border:1px solid #c4c1bc;border-radius:3px;background:#f2f1f0"></div>
<div class="abs" style="left:4px;top:378px;width:218px;height:252.300px;background:#fff;overflow:hidden" id="ptab">
<div class="abs" style="left:0;top:0;width:218px;height:23px;background:linear-gradient(#fbfbfa,#efeeec);border-bottom:1px solid #cfccc8"></div><div class="abs" style="left:92px;top:0;width:1px;height:23px;background:#cfccc8"></div>
<div class="t" style="left:4.500px;top:4px;letter-spacing:.1px">Property</div><div class="t" style="left:96px;top:4px">Value</div>
<div class="abs" style="left:0;top:23px;width:218px;height:19.400px;background:#c8c6c3"></div><div class="t" style="left:22px;top:25px;color:#fff;font-weight:bold;font-size:13.500px;letter-spacing:-.55px">Base</div>
<div class="pr g" style="left:0;top:42.4px"><div class="k" style="letter-spacing:-0.2px">Boundin…</div><div class="v" style="letter-spacing:-0.2px">false</div><div class="ln"></div><div class="vl"></div></div>
<div class="pr w" style="left:0;top:60.8px"><div class="k" style="letter-spacing:0px">Deviation</div><div class="v" style="letter-spacing:-0.5px">0,50</div><div class="ln"></div><div class="vl"></div></div>
<div class="pr g" style="left:0;top:79.2px"><div class="k" style="letter-spacing:-0.42px">Display …</div><div class="v" style="letter-spacing:-0.37px">Flat Lines</div><div class="ln"></div><div class="vl"></div></div>
<div class="pr w" style="left:0;top:97.6px"><div class="k" style="letter-spacing:-0.2px">Draw Style</div><div class="v" style="letter-spacing:-0.46px">Solid</div><div class="ln"></div><div class="vl"></div></div>
<div class="pr g" style="left:0;top:116.0px"><div class="k" style="letter-spacing:0px">Lighting</div><div class="v" style="letter-spacing:-0.4px">Two side</div><div class="ln"></div><div class="vl"></div></div>
<div class="pr w" style="left:0;top:134.4px"><div class="k" style="letter-spacing:-0.3px">Line Color</div><div class="sw" style="background:#000"></div><div class="v" style="left:123.500px;letter-spacing:-0.37px">[0, 0, 0]</div><div class="ln"></div><div class="vl"></div></div>
<div class="pr g" style="left:0;top:152.8px"><div class="k" style="letter-spacing:-0.15px">Line Width</div><div class="v" style="letter-spacing:-0.5px">2,00</div><div class="ln"></div><div class="vl"></div></div>
<div class="pr w" style="left:0;top:171.2px"><div class="k" style="letter-spacing:-0.35px">Point Co…</div><div class="sw" style="background:#000"></div><div class="v" style="left:123.500px;letter-spacing:-0.37px">[0, 0, 0]</div><div class="ln"></div><div class="vl"></div></div>
<div class="pr g" style="left:0;top:189.6px"><div class="k" style="letter-spacing:-0.35px">Point Size</div><div class="v" style="letter-spacing:-0.5px">2,00</div><div class="ln"></div><div class="vl"></div></div>
<div class="pr w" style="left:0;top:208.0px"><div class="k" style="letter-spacing:-0.27px">Selectable</div><div class="v" style="letter-spacing:0px">true</div><div class="ln"></div><div class="vl"></div></div>
<div class="pr g" style="left:0;top:226.4px"><div class="k" style="letter-spacing:-0.85px">Shape C…</div><div class="sw" style="background:#cccccc"></div><div class="v" style="left:123.500px;letter-spacing:-0.33px">[204, 204, 204]</div><div class="ln"></div><div class="vl"></div></div>
<div class="pr w" style="left:0;top:244.8px"><div class="k" style="letter-spacing:-0.3px">Transpar…</div><div class="v" style="letter-spacing:0px">0</div><div class="ln"></div><div class="vl"></div></div>
</div>
<div class="abs" style="left:225px;top:378px;width:13px;height:253px;background:#e4e2de;border-radius:6px;border:1px solid #cfccc8"></div>
<div class="abs" style="left:226px;top:391px;width:11px;height:195px;background:linear-gradient(90deg,#fdfdfc,#e9e7e4);border:1px solid #aeaba6;border-radius:6px"></div>
<svg class="abs" style="left:226px;top:378px" width="12" height="253" viewBox="0 0 12 253"><path d="M3.200 8.500L5.700 5l2.500 3.500z" fill="#6a6965"/><path d="M3.200 244L5.700 247.500l2.500-3.500z" fill="#6a6965"/><path d="M4 106.500h4M4 109h4M4 111.500h4" stroke="#b9b6b1" stroke-width="1"/></svg>
<svg class="abs" style="left:0;top:628px" width="244" height="34" viewBox="0 628 244 34"><path d="M0.500 660.500H240.500V632" fill="none" stroke="#cfccc8"/><path d="M49 631.500L55 653Q56 656.500 60 656.500H80Q84 656.500 85 653L90 631.500" fill="#f2f1f0" stroke="#8f8c87" stroke-width="1"/><path d="M3 631L9 654.500Q10 658 14 658H36Q40 658 41 654.500L47 631" fill="#fdfdfd" stroke="#8f8c87" stroke-width="1"/></svg>
<div class="t" style="left:10px;top:637.500px;letter-spacing:-.33px">View</div><div class="t" style="left:55px;top:636.500px;letter-spacing:-.2px">Data</div>
</div>
<svg class="abs" style="left:247px;top:77px;filter:blur(0.45px)" width="924" height="554" viewBox="247 77 924 554">
<defs><linearGradient id="bg" x1="0" y1="0" x2="0" y2="1"><stop offset="0" stop-color="#333365"/><stop offset="1" stop-color="#9797aa"/></linearGradient>
<linearGradient id="cyl" x1="0" y1="0" x2="1" y2="0"><stop offset="0" stop-color="#c80d0d"/><stop offset="0.25" stop-color="#f81010"/><stop offset="0.6" stop-color="#fa1212"/><stop offset="1" stop-color="#b80c0c"/></linearGradient>
<linearGradient id="gmin" gradientUnits="userSpaceOnUse" x1="0" y1="77" x2="0" y2="631"><stop offset="0" stop-color="#2c2c48" stop-opacity="0.26"/><stop offset="0.6" stop-color="#2c2c48" stop-opacity="0.37"/><stop offset="1" stop-color="#2c2c48" stop-opacity="0.38"/></linearGradient><linearGradient id="gmaj" gradientUnits="userSpaceOnUse" x1="0" y1="77" x2="0" y2="631"><stop offset="0" stop-color="#2a2a46" stop-opacity="0.5"/><stop offset="0.6" stop-color="#2a2a46" stop-opacity="0.72"/><stop offset="1" stop-color="#2a2a46" stop-opacity="0.75"/></linearGradient>
<clipPath id="cb"><polygon points="685.1,250.7 715.0,232.0 775.1,238.7 777.8,301.5 747.9,321.0 688.9,314.0"/></clipPath>
<clipPath id="ct"><polygon points="658.4,258.7 883.3,282.8 770.9,349.5 545.0,327.5"/></clipPath>
</defs>
<rect x="247" y="77" width="924" height="554" fill="url(#bg)"/>
<polygon points="658.4,258.7 883.3,282.8 770.9,349.5 545.0,327.5" fill="#464646" />
<polygon points="545.0,327.5 770.9,349.5 833.1,478.9 488.5,443.1" fill="#999999" />
<polygon points="770.9,349.5 883.3,282.8 1006.6,375.3 833.1,478.9" fill="#84ff84" />
<polygon points="658.4,258.7 883.3,282.8 770.9,349.5 545.0,327.5" fill="none" stroke="#000" stroke-width="1.6" fill="none" stroke-linejoin="round"/>
<polygon points="545.0,327.5 770.9,349.5 833.1,478.9 488.5,443.1" fill="none" stroke="#000" stroke-width="1.6" fill="none" stroke-linejoin="round"/>
<polygon points="770.9,349.5 883.3,282.8 1006.6,375.3 833.1,478.9" fill="none" stroke="#000" stroke-width="1.6" fill="none" stroke-linejoin="round"/>
<path d="M443.3 56.4L140.2 675.6M432.8 61.8L1183.0 139.3M450.8 57.2L147.7 676.3M429.7 68.0L1180.0 145.5M458.3 57.9L155.2 677.1M426.7 74.2L1176.9 151.6M465.8 58.7L162.8 677.9M423.7 80.4L1173.9 157.8M473.3 59.5L170.3 678.7M420.6 86.6L1170.9 164.0M480.8 60.3L177.8 679.4M417.6 92.8L1167.8 170.2M488.3 61.0L185.3 680.2M414.6 98.9L1164.8 176.4M495.8 61.8L192.8 681.0M411.6 105.1L1161.8 182.6M503.3 62.6L200.3 681.8M408.5 111.3L1158.8 188.8M518.3 64.1L215.3 683.3M402.5 123.7L1152.7 201.2M525.8 64.9L222.8 684.1M399.4 129.9L1149.7 207.4M533.3 65.7L230.3 684.8M396.4 136.1L1146.6 213.6M540.8 66.5L237.8 685.6M393.4 142.3L1143.6 219.8M548.3 67.2L245.3 686.4M390.3 148.5L1140.6 225.9M555.8 68.0L252.8 687.2M387.3 154.7L1137.5 232.1M563.3 68.8L260.3 687.9M384.3 160.9L1134.5 238.3M570.8 69.5L267.8 688.7M381.2 167.1L1131.5 244.5M578.3 70.3L275.3 689.5M378.2 173.2L1128.5 250.7M593.3 71.9L290.3 691.0M372.2 185.6L1122.4 263.1M600.8 72.6L297.8 691.8M369.1 191.8L1119.4 269.3M608.4 73.4L305.3 692.6M366.1 198.0L1116.3 275.5M615.9 74.2L312.8 693.4M363.1 204.2L1113.3 281.7M623.4 75.0L320.3 694.1M360.0 210.4L1110.3 287.9M630.9 75.7L327.8 694.9M357.0 216.6L1107.2 294.1M638.4 76.5L335.3 695.7M354.0 222.8L1104.2 300.2M645.9 77.3L342.8 696.5M350.9 229.0L1101.2 306.4M653.4 78.1L350.3 697.2M347.9 235.2L1098.1 312.6M668.4 79.6L365.3 698.8M341.9 247.5L1092.1 325.0M675.9 80.4L372.8 699.6M338.8 253.7L1089.1 331.2M683.4 81.2L380.3 700.3M335.8 259.9L1086.0 337.4M690.9 81.9L387.8 701.1M332.8 266.1L1083.0 343.6M698.4 82.7L395.3 701.9M329.7 272.3L1080.0 349.8M705.9 83.5L402.8 702.7M326.7 278.5L1076.9 356.0M713.4 84.3L410.3 703.4M323.7 284.7L1073.9 362.2M720.9 85.0L417.8 704.2M320.6 290.9L1070.9 368.4M728.4 85.8L425.3 705.0M317.6 297.1L1067.8 374.6M743.4 87.4L440.3 706.5M311.5 309.5L1061.8 386.9M750.9 88.1L447.8 707.3M308.5 315.7L1058.7 393.1M758.4 88.9L455.3 708.1M305.5 321.8L1055.7 399.3M765.9 89.7L462.8 708.9M302.5 328.0L1052.7 405.5M773.4 90.5L470.3 709.6M299.4 334.2L1049.7 411.7M780.9 91.2L477.8 710.4M296.4 340.4L1046.6 417.9M788.4 92.0L485.4 711.2M293.4 346.6L1043.6 424.1M795.9 92.8L492.9 712.0M290.3 352.8L1040.6 430.3M803.4 93.6L500.4 712.7M287.3 359.0L1037.5 436.5M818.4 95.1L515.4 714.3M281.2 371.4L1031.5 448.9M825.9 95.9L522.9 715.1M278.2 377.6L1028.4 455.0M833.4 96.7L530.4 715.8M275.2 383.8L1025.4 461.2M840.9 97.4L537.9 716.6M272.1 390.0L1022.4 467.4M848.4 98.2L545.4 717.4M269.1 396.2L1019.3 473.6M855.9 99.0L552.9 718.2M266.1 402.3L1016.3 479.8M863.4 99.8L560.4 718.9M263.1 408.5L1013.3 486.0M870.9 100.5L567.9 719.7M260.0 414.7L1010.3 492.2M878.4 101.3L575.4 720.5M257.0 420.9L1007.2 498.4M893.4 102.9L590.4 722.0M250.9 433.3L1001.2 510.8M900.9 103.6L597.9 722.8M247.9 439.5L998.1 517.0M908.4 104.4L605.4 723.6M244.9 445.7L995.1 523.2M915.9 105.2L612.9 724.4M241.8 451.9L992.1 529.3M923.4 106.0L620.4 725.1M238.8 458.1L989.0 535.5M931.0 106.7L627.9 725.9M235.8 464.3L986.0 541.7M938.5 107.5L635.4 726.7M232.7 470.5L983.0 547.9M946.0 108.3L642.9 727.5M229.7 476.6L980.0 554.1M953.5 109.1L650.4 728.2M226.7 482.8L976.9 560.3M968.5 110.6L665.4 729.8M220.6 495.2L970.9 572.7M976.0 111.4L672.9 730.6M217.6 501.4L967.8 578.9M983.5 112.2L680.4 731.3M214.6 507.6L964.8 585.1M991.0 112.9L687.9 732.1M211.5 513.8L961.8 591.3M998.5 113.7L695.4 732.9M208.5 520.0L958.7 597.5M1006.0 114.5L702.9 733.7M205.5 526.2L955.7 603.6M1013.5 115.3L710.4 734.4M202.4 532.4L952.7 609.8M1021.0 116.0L717.9 735.2M199.4 538.6L949.6 616.0M1028.5 116.8L725.4 736.0M196.4 544.8L946.6 622.2M1043.5 118.4L740.4 737.5M190.3 557.1L940.6 634.6M1051.0 119.1L747.9 738.3M187.3 563.3L937.5 640.8M1058.5 119.9L755.4 739.1M184.3 569.5L934.5 647.0M1066.0 120.7L762.9 739.9M181.2 575.7L931.5 653.2M1073.5 121.5L770.4 740.6M178.2 581.9L928.4 659.4M1081.0 122.2L777.9 741.4M175.2 588.1L925.4 665.6M1088.5 123.0L785.4 742.2M172.1 594.3L922.4 671.8M1096.0 123.8L792.9 743.0M169.1 600.5L919.3 677.9M1103.5 124.6L800.4 743.7M166.1 606.7L916.3 684.1M1118.5 126.1L815.5 745.3M160.0 619.1L910.2 696.5M1126.0 126.9L823.0 746.0M157.0 625.2L907.2 702.7M1133.5 127.7L830.5 746.8M154.0 631.4L904.2 708.9M1141.0 128.4L838.0 747.6M150.9 637.6L901.2 715.1M1148.5 129.2L845.5 748.4M147.9 643.8L898.1 721.3M1156.0 130.0L853.0 749.1M144.9 650.0L895.1 727.5M1163.5 130.7L860.5 749.9M141.8 656.2L892.1 733.7M1171.0 131.5L868.0 750.7M138.8 662.4L889.0 739.9M1178.5 132.3L875.5 751.5M135.8 668.6L886.0 746.1" stroke="url(#gmin)" stroke-width="1.15" fill="none"/>
<path d="M435.8 55.6L132.7 674.8M435.8 55.6L1186.0 133.1M510.8 63.4L207.8 682.5M405.5 117.5L1155.7 195.0M585.8 71.1L282.8 690.3M375.2 179.4L1125.4 256.9M660.9 78.8L357.8 698.0M344.9 241.4L1095.1 318.8M735.9 86.6L432.8 705.8M314.6 303.3L1064.8 380.7M810.9 94.3L507.9 713.5M284.3 365.2L1034.5 442.7M885.9 102.1L582.9 721.3M254.0 427.1L1004.2 504.6M961.0 109.8L657.9 729.0M223.7 489.0L973.9 566.5M1036.0 117.6L732.9 736.8M193.4 550.9L943.6 628.4M1111.0 125.3L808.0 744.5M163.0 612.9L913.3 690.3M1186.0 133.1L883.0 752.2M132.7 674.8L883.0 752.2" stroke="url(#gmaj)" stroke-width="1.25" fill="none"/>
<polygon points="658.4,258.7 883.3,282.8 770.9,349.5 545.0,327.5" fill="#464646" fill-opacity="0.45"/>
<polygon points="658.4,258.7 883.3,282.8 770.9,349.5 545.0,327.5" fill="none" stroke="#000" stroke-width="1.6" fill="none" stroke-linejoin="round"/>
<polygon points="685.1,250.7 715.0,232.0 775.1,238.7 744.4,256.0" fill="#0a0a86" />
<polygon points="685.1,250.7 744.4,256.0 747.9,321.0 688.9,314.0" fill="#0c0cf0" />
<polygon points="744.4,256.0 775.1,238.7 777.8,301.5 747.9,321.0" fill="#0a0aa4" />
<g clip-path="url(#cb)"><path d="M443.3 56.4L140.2 675.6M432.8 61.8L1183.0 139.3M450.8 57.2L147.7 676.3M429.7 68.0L1180.0 145.5M458.3 57.9L155.2 677.1M426.7 74.2L1176.9 151.6M465.8 58.7L162.8 677.9M423.7 80.4L1173.9 157.8M473.3 59.5L170.3 678.7M420.6 86.6L1170.9 164.0M480.8 60.3L177.8 679.4M417.6 92.8L1167.8 170.2M488.3 61.0L185.3 680.2M414.6 98.9L1164.8 176.4M495.8 61.8L192.8 681.0M411.6 105.1L1161.8 182.6M503.3 62.6L200.3 681.8M408.5 111.3L1158.8 188.8M518.3 64.1L215.3 683.3M402.5 123.7L1152.7 201.2M525.8 64.9L222.8 684.1M399.4 129.9L1149.7 207.4M533.3 65.7L230.3 684.8M396.4 136.1L1146.6 213.6M540.8 66.5L237.8 685.6M393.4 142.3L1143.6 219.8M548.3 67.2L245.3 686.4M390.3 148.5L1140.6 225.9M555.8 68.0L252.8 687.2M387.3 154.7L1137.5 232.1M563.3 68.8L260.3 687.9M384.3 160.9L1134.5 238.3M570.8 69.5L267.8 688.7M381.2 167.1L1131.5 244.5M578.3 70.3L275.3 689.5M378.2 173.2L1128.5 250.7M593.3 71.9L290.3 691.0M372.2 185.6L1122.4 263.1M600.8 72.6L297.8 691.8M369.1 191.8L1119.4 269.3M608.4 73.4L305.3 692.6M366.1 198.0L1116.3 275.5M615.9 74.2L312.8 693.4M363.1 204.2L1113.3 281.7M623.4 75.0L320.3 694.1M360.0 210.4L1110.3 287.9M630.9 75.7L327.8 694.9M357.0 216.6L1107.2 294.1M638.4 76.5L335.3 695.7M354.0 222.8L1104.2 300.2M645.9 77.3L342.8 696.5M350.9 229.0L1101.2 306.4M653.4 78.1L350.3 697.2M347.9 235.2L1098.1 312.6M668.4 79.6L365.3 698.8M341.9 247.5L1092.1 325.0M675.9 80.4L372.8 699.6M338.8 253.7L1089.1 331.2M683.4 81.2L380.3 700.3M335.8 259.9L1086.0 337.4M690.9 81.9L387.8 701.1M332.8 266.1L1083.0 343.6M698.4 82.7L395.3 701.9M329.7 272.3L1080.0 349.8M705.9 83.5L402.8 702.7M326.7 278.5L1076.9 356.0M713.4 84.3L410.3 703.4M323.7 284.7L1073.9 362.2M720.9 85.0L417.8 704.2M320.6 290.9L1070.9 368.4M728.4 85.8L425.3 705.0M317.6 297.1L1067.8 374.6M743.4 87.4L440.3 706.5M311.5 309.5L1061.8 386.9M750.9 88.1L447.8 707.3M308.5 315.7L1058.7 393.1M758.4 88.9L455.3 708.1M305.5 321.8L1055.7 399.3M765.9 89.7L462.8 708.9M302.5 328.0L1052.7 405.5M773.4 90.5L470.3 709.6M299.4 334.2L1049.7 411.7M780.9 91.2L477.8 710.4M296.4 340.4L1046.6 417.9M788.4 92.0L485.4 711.2M293.4 346.6L1043.6 424.1M795.9 92.8L492.9 712.0M290.3 352.8L1040.6 430.3M803.4 93.6L500.4 712.7M287.3 359.0L1037.5 436.5M818.4 95.1L515.4 714.3M281.2 371.4L1031.5 448.9M825.9 95.9L522.9 715.1M278.2 377.6L1028.4 455.0M833.4 96.7L530.4 715.8M275.2 383.8L1025.4 461.2M840.9 97.4L537.9 716.6M272.1 390.0L1022.4 467.4M848.4 98.2L545.4 717.4M269.1 396.2L1019.3 473.6M855.9 99.0L552.9 718.2M266.1 402.3L1016.3 479.8M863.4 99.8L560.4 718.9M263.1 408.5L1013.3 486.0M870.9 100.5L567.9 719.7M260.0 414.7L1010.3 492.2M878.4 101.3L575.4 720.5M257.0 420.9L1007.2 498.4M893.4 102.9L590.4 722.0M250.9 433.3L1001.2 510.8M900.9 103.6L597.9 722.8M247.9 439.5L998.1 517.0M908.4 104.4L605.4 723.6M244.9 445.7L995.1 523.2M915.9 105.2L612.9 724.4M241.8 451.9L992.1 529.3M923.4 106.0L620.4 725.1M238.8 458.1L989.0 535.5M931.0 106.7L627.9 725.9M235.8 464.3L986.0 541.7M938.5 107.5L635.4 726.7M232.7 470.5L983.0 547.9M946.0 108.3L642.9 727.5M229.7 476.6L980.0 554.1M953.5 109.1L650.4 728.2M226.7 482.8L976.9 560.3M968.5 110.6L665.4 729.8M220.6 495.2L970.9 572.7M976.0 111.4L672.9 730.6M217.6 501.4L967.8 578.9M983.5 112.2L680.4 731.3M214.6 507.6L964.8 585.1M991.0 112.9L687.9 732.1M211.5 513.8L961.8 591.3M998.5 113.7L695.4 732.9M208.5 520.0L958.7 597.5M1006.0 114.5L702.9 733.7M205.5 526.2L955.7 603.6M1013.5 115.3L710.4 734.4M202.4 532.4L952.7 609.8M1021.0 116.0L717.9 735.2M199.4 538.6L949.6 616.0M1028.5 116.8L725.4 736.0M196.4 544.8L946.6 622.2M1043.5 118.4L740.4 737.5M190.3 557.1L940.6 634.6M1051.0 119.1L747.9 738.3M187.3 563.3L937.5 640.8M1058.5 119.9L755.4 739.1M184.3 569.5L934.5 647.0M1066.0 120.7L762.9 739.9M181.2 575.7L931.5 653.2M1073.5 121.5L770.4 740.6M178.2 581.9L928.4 659.4M1081.0 122.2L777.9 741.4M175.2 588.1L925.4 665.6M1088.5 123.0L785.4 742.2M172.1 594.3L922.4 671.8M1096.0 123.8L792.9 743.0M169.1 600.5L919.3 677.9M1103.5 124.6L800.4 743.7M166.1 606.7L916.3 684.1M1118.5 126.1L815.5 745.3M160.0 619.1L910.2 696.5M1126.0 126.9L823.0 746.0M157.0 625.2L907.2 702.7M1133.5 127.7L830.5 746.8M154.0 631.4L904.2 708.9M1141.0 128.4L838.0 747.6M150.9 637.6L901.2 715.1M1148.5 129.2L845.5 748.4M147.9 643.8L898.1 721.3M1156.0 130.0L853.0 749.1M144.9 650.0L895.1 727.5M1163.5 130.7L860.5 749.9M141.8 656.2L892.1 733.7M1171.0 131.5L868.0 750.7M138.8 662.4L889.0 739.9M1178.5 132.3L875.5 751.5M135.8 668.6L886.0 746.1" stroke="#5a5aa8" stroke-opacity="0.24" stroke-width="1.15" fill="none"/><path d="M435.8 55.6L132.7 674.8M435.8 55.6L1186.0 133.1M510.8 63.4L207.8 682.5M405.5 117.5L1155.7 195.0M585.8 71.1L282.8 690.3M375.2 179.4L1125.4 256.9M660.9 78.8L357.8 698.0M344.9 241.4L1095.1 318.8M735.9 86.6L432.8 705.8M314.6 303.3L1064.8 380.7M810.9 94.3L507.9 713.5M284.3 365.2L1034.5 442.7M885.9 102.1L582.9 721.3M254.0 427.1L1004.2 504.6M961.0 109.8L657.9 729.0M223.7 489.0L973.9 566.5M1036.0 117.6L732.9 736.8M193.4 550.9L943.6 628.4M1111.0 125.3L808.0 744.5M163.0 612.9L913.3 690.3M1186.0 133.1L883.0 752.2M132.7 674.8L883.0 752.2" stroke="#6868a8" stroke-opacity="0.42" stroke-width="1.25" fill="none"/></g>
<polygon points="685.1,250.7 715.0,232.0 775.1,238.7 744.4,256.0" fill="none" stroke="#1a1a38" stroke-width="1.7" fill="none" stroke-linejoin="round"/>
<polygon points="685.1,250.7 744.4,256.0 747.9,321.0 688.9,314.0" fill="none" stroke="#1a1a38" stroke-width="1.7" fill="none" stroke-linejoin="round"/>
<polygon points="744.4,256.0 775.1,238.7 777.8,301.5 747.9,321.0" fill="none" stroke="#1a1a38" stroke-width="1.7" fill="none" stroke-linejoin="round"/>
<path d="M307.5 425L459.5 334.5M307.5 425L515 339.5M496.3 311.7L573.8 308.7" stroke="#000" stroke-width="1.7" fill="none"/>
<polygon points="521.6,327.9 581.3,333.2 559.4,381.8 499.5,376.7" fill="#c4c011" stroke="#111" stroke-width="1.3" stroke-linejoin="round"/>
<polygon points="499.5,376.7 559.4,381.8 576.1,426.6 516.9,421.3" fill="#a3a20f" stroke="#111" stroke-width="1.3" stroke-linejoin="round"/>
<polygon points="559.4,381.8 581.3,333.2 600.1,377.8 576.1,426.6" fill="#7f800c" stroke="#111" stroke-width="1.3" stroke-linejoin="round"/>
<path d="M760.2 457 L764 537 A16.5 5 0 0 0 797 536.5 L792.8 457 Z" fill="url(#cyl)" stroke="#300" stroke-width="1"/>
<ellipse cx="776.5" cy="457" rx="16.3" ry="5" fill="#7c0f0f" stroke="#2a0a0a" stroke-width="1.2"/>
<path d="M791.3 459 L795.2 537.5" stroke="#400" stroke-width="1" fill="none"/>
<g stroke-width="1.5" fill="none"><path d="M1143 603L1142.3 588" stroke="#1c1c96"/><path d="M1143 603L1157 604.8" stroke="#9a2626"/><path d="M1144 602.6L1149.2 599.6" stroke="#1c9a1c" stroke-width="2.2" stroke-linecap="round"/></g>
<path d="M1140.2 590.2L1142.1 583.2L1144.3 590.2z" fill="#1c1c96"/><path d="M1154.8 602.800L1162.2 605.4L1154.6 607.200z" fill="#9a2626"/>
<g font-family="Liberation Sans,sans-serif" font-size="9.300" fill="#0c0c0c" stroke="#0c0c0c" stroke-width=".25"><text x="1144.4" y="583.900">Z</text><text x="1151.700" y="599.800">Y</text><text x="1164.300" y="606.100">X</text></g>
</svg>
<!-- RIGHT TOOLBAR -->
<svg class="abs" style="left:1179px;top:80px" width="10" height="5" viewBox="0 0 10 5"><path d="M1.500 0V4M4.500 0V4M7.500 0V4" stroke="#c9c6c1" stroke-width="1"/></svg>
<div class="btn" style="left:1173px;top:88px;width:22px;height:22px;background:linear-gradient(#fdfdfc,#ebe9e6);border-color:#c4c1bc;border-radius:4.500px"></div>
<svg class="abs" style="left:1173px;top:88px" width="22" height="22" viewBox="0 0 22 22"><path d="M8.300 10V8Q8.300 4.800 11.700 4.800Q15.100 4.800 15.100 8V10" fill="none" stroke="#06513c" stroke-width="3"/><path d="M8.300 10V8Q8.300 4.800 11.700 4.800Q15.100 4.800 15.100 8V10" fill="none" stroke="#7fd8c0" stroke-width="1.200"/><rect x="6.800" y="9.600" width="9.800" height="8" rx=".8" fill="url(#grn)" stroke="#06513c" stroke-width=".9" stroke-linejoin="round"/><path d="M7.600 12h8.200M7.600 14.400h8.200" stroke="#5fd0b0" stroke-width=".7"/></svg>
<div class="btn" style="left:1173px;top:112px;width:22px;height:22px;background:linear-gradient(#fdfdfc,#ebe9e6);border-color:#c4c1bc;border-radius:4.500px"></div>
<svg class="abs" style="left:1173px;top:112px" width="22" height="22" viewBox="0 0 22 22"><path d="M4.700 17.500L17.250 5.700" stroke="#06513c" stroke-width="3.400" stroke-linecap="round"/><path d="M4.700 17.500L17.250 5.700" stroke="#10a07c" stroke-width="1.800" stroke-linecap="round"/><circle cx="11" cy="11.600" r="3.300" fill="url(#grn)" stroke="#06513c" stroke-width=".9" stroke-linejoin="round"/></svg>
<div class="btn" style="left:1173px;top:136px;width:22px;height:22px;background:linear-gradient(#fdfdfc,#ebe9e6);border-color:#c4c1bc;border-radius:4.500px"></div>
<svg class="abs" style="left:1173px;top:136px" width="22" height="22" viewBox="0 0 22 22"><path d="M10.200 5H12.800V15H18.400V18H4.700V15H10.200z" fill="url(#grn)" stroke="#06513c" stroke-width=".9" stroke-linejoin="round"/></svg>
<div class="btn" style="left:1173px;top:160px;width:22px;height:22px;background:linear-gradient(#fdfdfc,#ebe9e6);border-color:#c4c1bc;border-radius:4.500px"></div>
<svg class="abs" style="left:1173px;top:160px" width="22" height="22" viewBox="0 0 22 22"><path d="M8.800 5.200V17.400M13.800 5.200V17.400M5.200 8.800H17.400M5.200 13.800H17.400" fill="none" stroke="#06513c" stroke-width="3.800" stroke-linecap="round"/><path d="M8.800 5.200V17.400M13.800 5.200V17.400M5.200 8.800H17.400M5.200 13.800H17.400" fill="none" stroke="#10a07c" stroke-width="2.300" stroke-linecap="round"/></svg>
<div class="btn" style="left:1173px;top:184px;width:22px;height:22px;background:linear-gradient(#fdfdfc,#ebe9e6);border-color:#c4c1bc;border-radius:4.500px"></div>
<svg class="abs" style="left:1173px;top:184px" width="22" height="22" viewBox="0 0 22 22"><path d="M6.800 4.400L11.500 9.100L16.200 4.400L18.600 6.800L13.900 11.500L18.600 16.200L16.200 18.600L11.500 13.900L6.800 18.600L4.400 16.200L9.100 11.500L4.400 6.800z" fill="url(#grn)" stroke="#06513c" stroke-width=".9" stroke-linejoin="round"/></svg>
<div class="btn" style="left:1173px;top:208px;width:22px;height:22px;background:linear-gradient(#fdfdfc,#ebe9e6);border-color:#c4c1bc;border-radius:4.500px"></div>
<svg class="abs" style="left:1173px;top:208px" width="22" height="22" viewBox="0 0 22 22"><path d="M8.200 5.500L18.600 12" stroke="#06513c" stroke-width="3.600"/><path d="M8.200 5.500L18.600 12" stroke="#10a07c" stroke-width="2"/><path d="M4.700 10.600L15.200 16.900" stroke="#06513c" stroke-width="3.600"/><path d="M4.700 10.600L15.200 16.900" stroke="#10a07c" stroke-width="2"/></svg>
<div class="btn" style="left:1173px;top:232px;width:22px;height:22px;background:linear-gradient(#fdfdfc,#ebe9e6);border-color:#c4c1bc;border-radius:4.500px"></div>
<svg class="abs" style="left:1173px;top:232px" width="22" height="22" viewBox="0 0 22 22"><path d="M8 13.400L17 6.500" stroke="#06513c" stroke-width="3.400" stroke-linecap="round"/><path d="M8 13.400L17 6.500" stroke="#10a07c" stroke-width="1.800" stroke-linecap="round"/><circle cx="7.300" cy="14.200" r="3" fill="url(#grn)" stroke="#06513c" stroke-width=".9" stroke-linejoin="round"/></svg>
<div class="btn" style="left:1173px;top:256px;width:22px;height:22px;background:linear-gradient(#fdfdfc,#ebe9e6);border-color:#c4c1bc;border-radius:4.500px"></div>
<svg class="abs" style="left:1173px;top:256px" width="22" height="22" viewBox="0 0 22 22"><path d="M11.300 5.600L16.300 10.600L11.300 15.600L6.300 10.600z" fill="#f6f6f5" stroke="#06513c" stroke-width="2.600"/><path d="M11.300 5.600L16.300 10.600L11.300 15.600L6.300 10.600z" fill="none" stroke="#10a07c" stroke-width="1.200"/><circle cx="11.300" cy="5.400" r="2" fill="url(#grn)" stroke="#06513c" stroke-width=".9" stroke-linejoin="round"/><circle cx="16.500" cy="10.600" r="2" fill="url(#grn)" stroke="#06513c" stroke-width=".9" stroke-linejoin="round"/><circle cx="11.300" cy="15.800" r="2" fill="url(#grn)" stroke="#06513c" stroke-width=".9" stroke-linejoin="round"/><circle cx="6.100" cy="10.600" r="2" fill="url(#grn)" stroke="#06513c" stroke-width=".9" stroke-linejoin="round"/></svg>
<div class="btn" style="left:1173px;top:280px;width:22px;height:22px;background:linear-gradient(#dedcd8,#e8e6e3);border-color:#c4c1bc;border-radius:4.500px"></div>
<svg class="abs" style="left:1173px;top:280px" width="22" height="22" viewBox="0 0 22 22"><circle cx="11.300" cy="10.700" r="6.200" fill="#10a07c" stroke="#06513c" stroke-width="1"/><circle cx="11.300" cy="10.700" r="3.600" fill="#8fd8c4" stroke="#06513c" stroke-width=".8"/><circle cx="11.300" cy="10.700" r="1.500" fill="#0a8064" stroke="#06513c" stroke-width=".6"/></svg>
<div class="btn" style="left:1173px;top:304px;width:22px;height:22px;background:linear-gradient(#fdfdfc,#ebe9e6);border-color:#c4c1bc;border-radius:4.500px"></div>
<svg class="abs" style="left:1173px;top:304px" width="22" height="22" viewBox="0 0 22 22"><circle cx="6" cy="11.300" r="1.900" fill="url(#grn)" stroke="#06513c" stroke-width=".9" stroke-linejoin="round"/><circle cx="11.300" cy="11.300" r="1.900" fill="url(#grn)" stroke="#06513c" stroke-width=".9" stroke-linejoin="round"/><circle cx="16.600" cy="11.300" r="1.900" fill="url(#grn)" stroke="#06513c" stroke-width=".9" stroke-linejoin="round"/></svg>
<div class="btn" style="left:1173px;top:328px;width:22px;height:22px;background:linear-gradient(#fdfdfc,#ebe9e6);border-color:#c4c1bc;border-radius:4.500px"></div>
<svg class="abs" style="left:1173px;top:328px" width="22" height="22" viewBox="0 0 22 22"><path d="M5 10.500L15.600 17.200" stroke="#06513c" stroke-width="3.600"/><path d="M5 10.500L15.600 17.200" stroke="#10a07c" stroke-width="2"/><circle cx="14.500" cy="7" r="2.100" fill="url(#grn)" stroke="#06513c" stroke-width=".9" stroke-linejoin="round"/></svg>
<div class="btn" style="left:1173px;top:352px;width:22px;height:22px;background:linear-gradient(#fdfdfc,#ebe9e6);border-color:#c4c1bc;border-radius:4.500px"></div>
<svg class="abs" style="left:1173px;top:352px" width="22" height="22" viewBox="0 0 22 22"><path d="M10 5.400H12.600V9.300H16.500V11.900H12.600V15.800H10V11.900H6.100V9.300H10z" fill="url(#grn)" stroke="#06513c" stroke-width=".9" stroke-linejoin="round"/></svg>
<div class="btn" style="left:1173px;top:376px;width:22px;height:22px;background:linear-gradient(#fdfdfc,#ebe9e6);border-color:#c4c1bc;border-radius:4.500px"></div>
<svg class="abs" style="left:1173px;top:376px" width="22" height="22" viewBox="0 0 22 22"><path d="M6.600 9V17.500M6.600 9H16.500V13" fill="none" stroke="#0a6a50" stroke-width="1.300"/><path d="M5 10.500h3M5 13h3M5 15.500h3M9 6.400v2.400M11.200 5.600v3M13.400 6.400v2.400M15.400 5.600v3" stroke="#0a6a50" stroke-width=".9"/><path d="M8.600 12.600H13.400V17.200H8.600" fill="none" stroke="#10a07c" stroke-width="1.100"/></svg>
<div class="btn" style="left:1173px;top:400px;width:22px;height:22px;background:linear-gradient(#fdfdfc,#ebe9e6);border-color:#c4c1bc;border-radius:4.500px"></div>
<svg class="abs" style="left:1173px;top:400px" width="22" height="22" viewBox="0 0 22 22"><rect x="5.400" y="5" width="11.900" height="11.400" rx=".8" fill="url(#grn)" stroke="#06513c" stroke-width=".9" stroke-linejoin="round"/><circle cx="8.800" cy="12.400" r="1.500" fill="#0a8064" stroke="#06513c" stroke-width=".7"/></svg>
<!-- MDI TAB + STATUS BAR -->
<div class="abs" style="left:242px;top:366px;width:4px;height:7px;border-top:1px solid #cbc8c3;border-bottom:1px solid #cbc8c3"></div><div class="abs" style="left:242px;top:369px;width:4px;height:1px;background:#cbc8c3"></div>
<div class="abs" style="left:247px;top:630px;width:181px;height:31px;border:1px solid #c4c1bc;border-top:none;border-radius:0 0 4px 4px;background:#f6f5f4"></div>
<svg class="abs" style="left:254px;top:638px" width="14" height="14" viewBox="0 0 14 14"><path d="M1.600 1.600H7.400V3.800H4V6H6.400V8H4V12.400H1.600z" fill="#e0241c" stroke="#8a1410" stroke-width=".6"/><circle cx="8.800" cy="8" r="3.300" fill="#1d56b8" stroke="#0c2f78" stroke-width=".7"/><path d="M8.800 3.400V12.600M4.200 8H13.400M5.500 4.700L12.100 11.300M12.100 4.700L5.500 11.300" stroke="#1d56b8" stroke-width="1.300"/><circle cx="8.800" cy="8" r="1.300" fill="#f0f0f4"/></svg>
<div class="t" style="left:276px;top:638.500px;letter-spacing:-0.17px">T13-ejemplo-ini : 1*</div>
<svg class="abs" style="left:405px;top:640px" width="12" height="12" viewBox="0 0 12 12"><path d="M2.200 2.200L9.800 9.800M9.800 2.200L2.200 9.800" stroke="#4a4a48" stroke-width="2.600"/></svg>
<div class="abs" style="left:0;top:661px;width:1200px;height:1px;background:#dedcd8"></div>
<div class="t" style="left:5px;top:667.500px;letter-spacing:-0.277px" id="st1">Preselected: T13_ejemplo_ini.Shell_solid.Face2 (22.330854,-8.440761,4.793216)</div>
<div class="t" style="left:1083px;top:667.500px;letter-spacing:-0.4px" id="st2">109.88 x 65.84 mm</div>
</body>
</html>
